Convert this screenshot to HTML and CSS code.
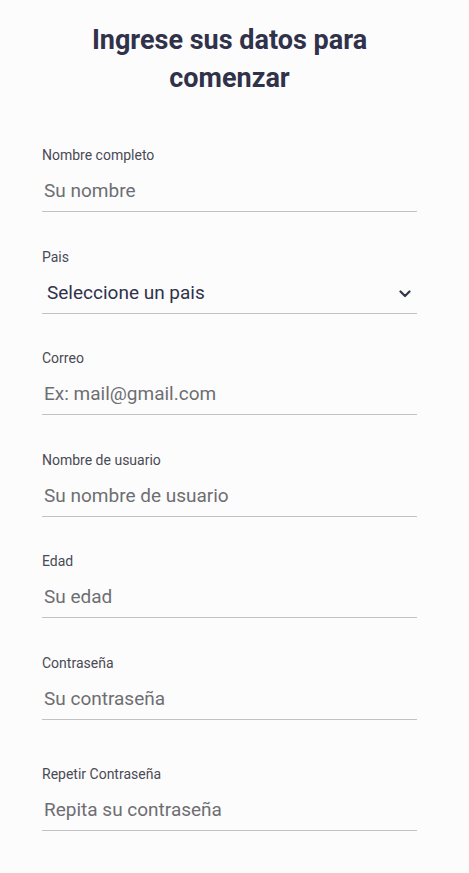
FILE: index.html
```html
<!DOCTYPE html>
<html lang="es">
<head>
<meta charset="utf-8">
<title>Registro</title>
<link rel="stylesheet" href="styles.css">
</head>
<body>
<main class="page">
  <h1 class="title">Ingrese sus datos para comenzar</h1>
  <form class="form">
    <div class="field">
      <label class="label">Nombre completo</label>
      <input class="input" type="text" placeholder="Su nombre">
    </div>
    <div class="field">
      <label class="label">Pais</label>
      <div class="select">
        <span class="select-text">Seleccione un pais</span>
        <svg class="chevron" width="12" height="8" viewBox="0 0 12 8"><path d="M1.5 1.5 L6 6 L10.5 1.5" fill="none" stroke="#34364a" stroke-width="2.2" stroke-linecap="round" stroke-linejoin="round"/></svg>
      </div>
    </div>
    <div class="field">
      <label class="label">Correo</label>
      <input class="input" type="text" placeholder="Ex: mail@gmail.com">
    </div>
    <div class="field">
      <label class="label">Nombre de usuario</label>
      <input class="input" type="text" placeholder="Su nombre de usuario">
    </div>
    <div class="field">
      <label class="label">Edad</label>
      <input class="input" type="text" placeholder="Su edad">
    </div>
    <div class="field field-extra">
      <label class="label">Contraseña</label>
      <input class="input" type="text" placeholder="Su contraseña">
    </div>
    <div class="field">
      <label class="label">Repetir Contraseña</label>
      <input class="input" type="text" placeholder="Repita su contraseña">
    </div>
  </form>
</main>
</body>
</html>
```
FILE: styles.css
```css
html, body {
  margin: 0;
  padding: 0;
  background: #fcfcfd;
}
body {
  font-family: Roboto, "Liberation Sans", sans-serif;
}
.page {
  width: 375px;
  margin-left: 42px;
  padding-top: 21px;
}
.title {
  margin: 0 auto;
  width: 300px;
  text-align: center;
  font-size: 27px;
  line-height: 38px;
  font-weight: 700;
  color: #30324a;
}
.form {
  display: flex;
  flex-direction: column;
  gap: 34.5px;
  margin-top: 48px;
}
.field {
  display: flex;
  flex-direction: column;
}
.field-extra {
  margin-bottom: 10px;
}
.label {
  font-size: 14px;
  line-height: 20px;
  color: #4a4a54;
  font-weight: 400;
}
.input {
  margin-top: 5px;
  height: 42px;
  box-sizing: border-box;
  border: none;
  border-bottom: 1px solid #c2c2c6;
  background: transparent;
  padding: 0 0 0 2px;
  font-family: Roboto, "Liberation Sans", sans-serif;
  font-size: 19px;
  color: #333;
  outline: none;
}
.input::placeholder {
  color: #6e6e72;
  opacity: 1;
}
.select {
  margin-top: 5px;
  height: 42px;
  box-sizing: border-box;
  border-bottom: 1px solid #c2c2c6;
  display: flex;
  align-items: center;
  justify-content: space-between;
  padding: 0 6px 0 5px;
}
.select-text {
  font-size: 19px;
  color: #30324a;
}
.chevron {
  display: block;
  margin-top: 3px;
}
```
